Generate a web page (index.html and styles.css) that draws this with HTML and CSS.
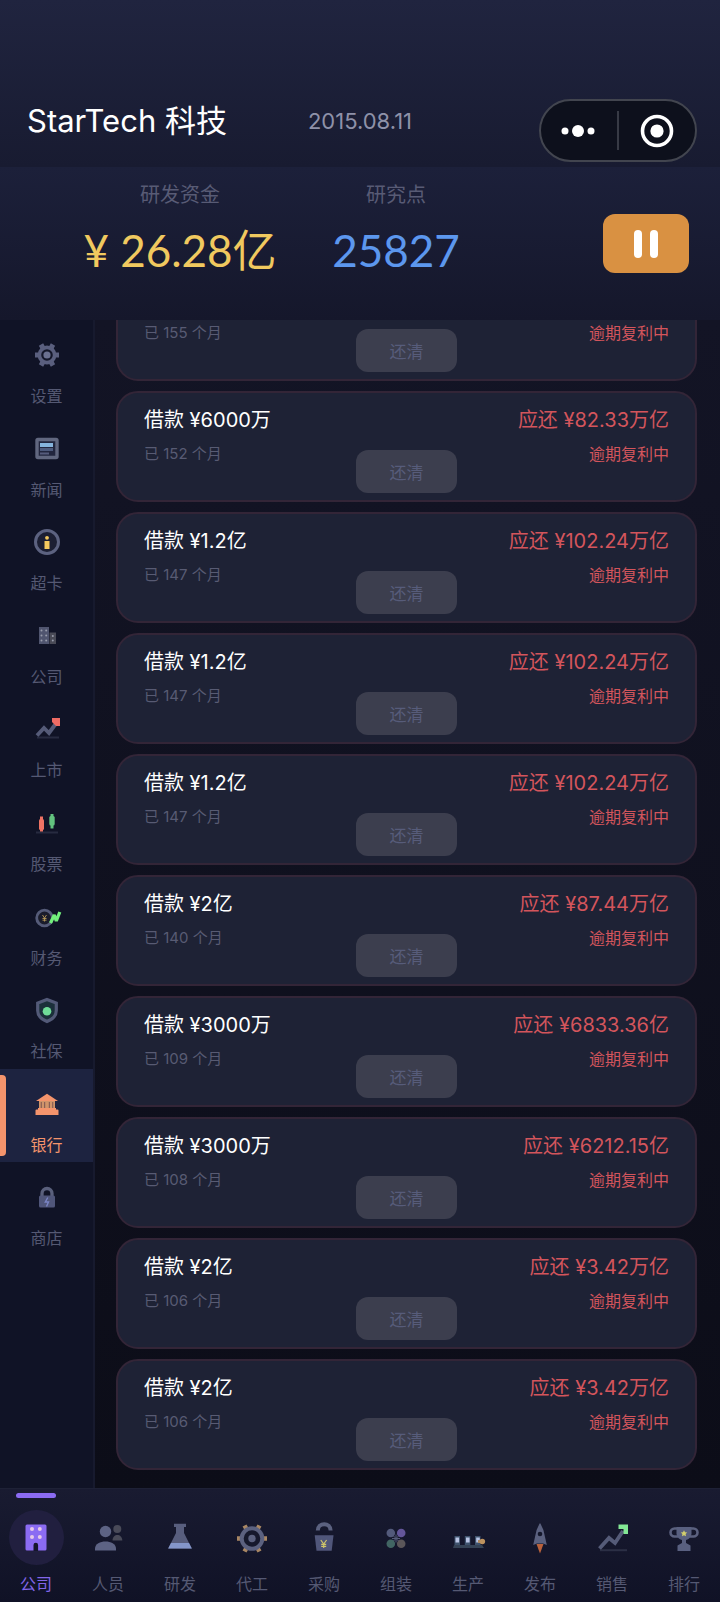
FILE: index.html
```html
<!DOCTYPE html>
<html lang="zh-CN">
<head>
<meta charset="utf-8">
<meta name="viewport" content="width=device-width, initial-scale=1">
<title>StarTech 科技</title>
<link rel="stylesheet" href="styles.css">
</head>
<body>
<header class="header">
  <div class="title-bar">
    <h1 class="company">StarTech 科技</h1>
    <time class="date" datetime="2015-08-11">2015.08.11</time>
  </div>
  <div class="capsule">
    <button class="capsule-btn" type="button" aria-label="更多">
      <svg width="36" height="36" viewBox="0 0 36 36" fill="#fff"><circle cx="4" cy="18" r="3.500"/><circle cx="17" cy="18" r="6"/><circle cx="30" cy="18" r="3.500"/></svg>
    </button>
    <span class="capsule-line"></span>
    <button class="capsule-btn" type="button" aria-label="关闭">
      <svg width="36" height="36" viewBox="0 0 36 36"><circle cx="18" cy="18" r="14.500" fill="none" stroke="#fff" stroke-width="3.600"/><circle cx="18" cy="18" r="6.600" fill="#fff"/></svg>
    </button>
  </div>
  <div class="stats">
    <div class="stat"><span class="stat-label">研发资金</span><span class="stat-value money">¥ 26.28亿</span></div>
    <div class="stat"><span class="stat-label">研究点</span><span class="stat-value points">25827</span></div>
    <button class="pause" type="button" aria-label="暂停"><span class="pause-bar"></span><span class="pause-bar"></span></button>
  </div>
</header>

<div class="content">
  <nav class="sidebar" aria-label="功能">
    <div class="side-list">
      <button class="side-item" type="button">
        <svg class="icon" viewBox="0 0 36 36"><g stroke="#5a5f7e" stroke-width="5"><path d="M6 18H11M25 18H30M12 7.600l2.500 4.300M21.500 24.100l2.500 4.300M24 7.600l-2.500 4.300M14.500 24.100l-2.500 4.300"/></g><circle cx="18" cy="18" r="7.600" fill="#14172a" stroke="#5a5f7e" stroke-width="3.600"/><circle cx="18" cy="18" r="3.600" fill="#6a7090"/></svg>
        <span>设置</span>
      </button>
      <button class="side-item" type="button">
        <svg class="icon" viewBox="0 0 36 36"><rect x="8" y="8.500" width="20" height="18" rx="1" fill="#22263e" stroke="#61677f" stroke-width="3.400"/><path d="M11 12h13v4H11z" fill="#86b4dc"/><path d="M11 17h13v3H11z" fill="#4d5a7c"/><path d="M11 21.500h9v2h-9z" fill="#565c7c"/></svg>
        <span>新闻</span>
      </button>
      <button class="side-item" type="button">
        <svg class="icon" viewBox="0 0 36 36"><circle cx="18" cy="18" r="11.500" fill="#1c1f33" stroke="#5c6280" stroke-width="3"/><circle cx="18" cy="13.800" r="1.900" fill="#f4c95e"/><path d="M15.500 17h5v8h-5z" fill="#f4c95e"/></svg>
        <span>超卡</span>
      </button>
      <button class="side-item" type="button">
        <svg class="icon" viewBox="0 0 36 36"><path d="M10 9h10v17H10z" fill="#50556f"/><path d="M20.500 14.500H27V26h-6.500z" fill="#494a56"/><g fill="#989cab"><circle cx="12.500" cy="12.500" r="1"/><circle cx="17.200" cy="12.500" r="1"/><circle cx="12.500" cy="17.500" r="1"/><circle cx="17.200" cy="17.500" r="1"/><circle cx="12.500" cy="22.500" r="1"/><circle cx="17.200" cy="22.500" r="1"/><circle cx="23.800" cy="18" r="1"/><circle cx="23.800" cy="22.500" r="1"/></g></svg>
        <span>公司</span>
      </button>
      <button class="side-item" type="button">
        <svg class="icon" viewBox="0 0 36 36"><path d="M8 26.500h22" stroke="#272b40" stroke-width="2"/><path d="M8 24.500l7-7.500 5 5 7-9.500" fill="none" stroke="#555b78" stroke-width="3.800"/><path d="M23 7h8v8h-4l-4-4z" fill="#ee6b64"/></svg>
        <span>上市</span>
      </button>
      <button class="side-item" type="button">
        <svg class="icon" viewBox="0 0 36 36"><path d="M7 27.500h22" stroke="#272b40" stroke-width="2"/><path d="M12.500 11.500v15" stroke="#ee7364" stroke-width="3"/><rect x="10" y="14" width="5" height="11" rx="1.500" fill="#ee7364"/><path d="M23 9v14.500" stroke="#62c27e" stroke-width="3"/><rect x="20.300" y="11" width="5.400" height="9.500" rx="1.500" fill="#62c27e"/></svg>
        <span>股票</span>
      </button>
      <button class="side-item" type="button">
        <svg class="icon" viewBox="0 0 36 36"><circle cx="15.500" cy="19" r="7.800" fill="#1a1c2b" stroke="#555b78" stroke-width="2.800"/><path d="M13.500 16l2 3 2-3M15.500 19v3.500M13.500 19.500h4M13.500 21.200h4" fill="none" stroke="#b89a58" stroke-width="0.900"/><path d="M21.500 24l3.800-8 2 6 3.500-9" fill="none" stroke="#72ef7c" stroke-width="3.200" stroke-linejoin="bevel"/></svg>
        <span>财务</span>
      </button>
      <button class="side-item" type="button">
        <svg class="icon" viewBox="0 0 36 36"><path d="M18 7.500l9.300 3.500v7.500c0 5-3.600 8.700-9.300 11-5.700-2.300-9.300-6-9.300-11V11z" fill="#1b2f3a" stroke="#535a78" stroke-width="3.200"/><circle cx="18" cy="19.200" r="4.300" fill="#6fdc98"/></svg>
        <span>社保</span>
      </button>
      <button class="side-item side-active" type="button" aria-current="page">
        <svg class="icon" viewBox="0 0 36 36"><path d="M10 15h16v8H10z" fill="#d0946a"/><path d="M12.300 16v7M15.600 16v7M20.400 16v7M23.700 16v7" stroke="#8a5f55" stroke-width="1.200"/><path d="M18 7.700L29 15H7z" fill="#f4946c"/><path d="M9 22h18v1.500h1.500q1 0 1 1V29h-23v-4.500q0-1 1-1H9z" fill="#f4946c"/></svg>
        <span>银行</span>
      </button>
      <button class="side-item" type="button">
        <svg class="icon" viewBox="0 0 36 36"><path d="M13 18v-3.500a5 5 0 0 1 10 0V18" fill="none" stroke="#5a607c" stroke-width="3.300"/><rect x="10" y="16.500" width="16" height="12" rx="1.500" fill="#50567a"/><path d="M18.800 18.500l-2.500 4.500h3.200l-2 4.500" fill="none" stroke="#7a84c4" stroke-width="1.400"/></svg>
        <span>商店</span>
      </button>
    </div>
  </nav>

  <main class="loans">
    <article class="loan"><div class="col"><p class="months">已 155 个月</p></div><button class="repay" type="button" disabled>还清</button><div class="col due"><p class="status">逾期复利中</p></div></article>
    <article class="loan"><div class="col"><h2 class="name">借款 ¥6000万</h2><p class="months">已 152 个月</p></div><button class="repay" type="button" disabled>还清</button><div class="col due"><p class="amount">应还 ¥82.33万亿</p><p class="status">逾期复利中</p></div></article>
    <article class="loan"><div class="col"><h2 class="name">借款 ¥1.2亿</h2><p class="months">已 147 个月</p></div><button class="repay" type="button" disabled>还清</button><div class="col due"><p class="amount">应还 ¥102.24万亿</p><p class="status">逾期复利中</p></div></article>
    <article class="loan"><div class="col"><h2 class="name">借款 ¥1.2亿</h2><p class="months">已 147 个月</p></div><button class="repay" type="button" disabled>还清</button><div class="col due"><p class="amount">应还 ¥102.24万亿</p><p class="status">逾期复利中</p></div></article>
    <article class="loan"><div class="col"><h2 class="name">借款 ¥1.2亿</h2><p class="months">已 147 个月</p></div><button class="repay" type="button" disabled>还清</button><div class="col due"><p class="amount">应还 ¥102.24万亿</p><p class="status">逾期复利中</p></div></article>
    <article class="loan"><div class="col"><h2 class="name">借款 ¥2亿</h2><p class="months">已 140 个月</p></div><button class="repay" type="button" disabled>还清</button><div class="col due"><p class="amount">应还 ¥87.44万亿</p><p class="status">逾期复利中</p></div></article>
    <article class="loan"><div class="col"><h2 class="name">借款 ¥3000万</h2><p class="months">已 109 个月</p></div><button class="repay" type="button" disabled>还清</button><div class="col due"><p class="amount">应还 ¥6833.36亿</p><p class="status">逾期复利中</p></div></article>
    <article class="loan"><div class="col"><h2 class="name">借款 ¥3000万</h2><p class="months">已 108 个月</p></div><button class="repay" type="button" disabled>还清</button><div class="col due"><p class="amount">应还 ¥6212.15亿</p><p class="status">逾期复利中</p></div></article>
    <article class="loan"><div class="col"><h2 class="name">借款 ¥2亿</h2><p class="months">已 106 个月</p></div><button class="repay" type="button" disabled>还清</button><div class="col due"><p class="amount">应还 ¥3.42万亿</p><p class="status">逾期复利中</p></div></article>
    <article class="loan"><div class="col"><h2 class="name">借款 ¥2亿</h2><p class="months">已 106 个月</p></div><button class="repay" type="button" disabled>还清</button><div class="col due"><p class="amount">应还 ¥3.42万亿</p><p class="status">逾期复利中</p></div></article>
  </main>
</div>

<nav class="tabs" aria-label="主导航">
  <button class="tab tab-active" type="button" aria-current="page">
    <span class="tab-icon"><svg class="icon" viewBox="0 0 36 36"><rect x="7.500" y="4.500" width="21" height="26" rx="1.500" fill="#8b6bf2"/><g fill="#e6c8e8"><circle cx="14" cy="9" r="2"/><circle cx="21.800" cy="9" r="2"/><circle cx="14" cy="17" r="2"/><circle cx="21.800" cy="17" r="2"/></g><path d="M15.500 31v-6a2.300 2.300 0 0 1 4.600 0v6z" fill="#15162c"/></svg></span>
    <span>公司</span>
  </button>
  <button class="tab" type="button">
    <span class="tab-icon"><svg class="icon" viewBox="0 0 36 36"><g fill="#494a58"><circle cx="27.300" cy="9" r="4"/><path d="M22.500 20.500c0-7.500 9.800-7.500 9.800 0z"/></g><g fill="#5d6384"><circle cx="15.500" cy="11.500" r="5.700"/><path d="M5 30.500v-2c0-9.500 21-9.500 21 0v2z"/></g></svg></span>
    <span>人员</span>
  </button>
  <button class="tab" type="button">
    <span class="tab-icon"><svg class="icon" viewBox="0 0 36 36"><path d="M12 3.700h12v3.300h-2v6l7.800 15.500H6.200L14 13V7h-2z" fill="#585e7e"/><path d="M9 23h18l2.800 5.500H6.200z" fill="#8496ca"/></svg></span>
    <span>研发</span>
  </button>
  <button class="tab" type="button">
    <span class="tab-icon"><svg class="icon" viewBox="0 0 36 36"><path d="M3 18.500h6M27 18.500h6M10.500 5.500l3 5.200M22.500 26.300l3 5.200M25.500 5.500l-3 5.200M13.500 26.300l-3 5.200" stroke="#a98763" stroke-width="4.500"/><circle cx="18" cy="18.500" r="10.300" fill="#15182c" stroke="#5b617f" stroke-width="4"/><circle cx="18" cy="18.500" r="3.700" fill="#5b617f"/></svg></span>
    <span>代工</span>
  </button>
  <button class="tab" type="button">
    <span class="tab-icon"><svg class="icon" viewBox="0 0 36 36"><path d="M11.800 10.500c0-8.500 12.800-8.500 12.800 0" fill="none" stroke="#5b617f" stroke-width="4"/><path d="M8.700 15.300h18.800l-1.800 15.500H10.500z" fill="#50567a"/><path d="M14.800 20l2.900 4 2.900-4M17.700 24v4M15.200 24.300h5M15.200 26.300h5" fill="none" stroke="#cfc66a" stroke-width="1.200"/></svg></span>
    <span>采购</span>
  </button>
  <button class="tab" type="button">
    <span class="tab-icon"><svg class="icon" viewBox="0 0 36 36"><circle cx="12.800" cy="13" r="4.300" fill="#535a7b"/><circle cx="23.200" cy="13" r="4.300" fill="#64569a"/><circle cx="12.800" cy="23.800" r="4.300" fill="#416563"/><circle cx="23.200" cy="23.800" r="4.300" fill="#5b5659"/><path d="M18 14.500v8M14 18.500h8M15.500 16l5 5M20.500 16l-5 5" stroke="#555b78" stroke-width="1"/></svg></span>
    <span>组装</span>
  </button>
  <button class="tab" type="button">
    <span class="tab-icon"><svg class="icon" viewBox="0 0 36 36"><path d="M4.500 16h5.500v9H4.500zM14.800 16h5.500v9h-5.500zM25 16h5.500v9H25z" fill="#3e526c"/><path d="M5.500 17.500h3.600v5H5.500zM16 17.500h3.600v5H16zM26.200 17.500h3.600v5h-3.600z" fill="#b8c4e4"/><path d="M4 25h28l2 3H3z" fill="#354356"/><path d="M28 20h3v3h-3z" fill="#a98763"/><circle cx="32.300" cy="21.500" r="2.800" fill="#bd925e"/></svg></span>
    <span>生产</span>
  </button>
  <button class="tab" type="button">
    <span class="tab-icon"><svg class="icon" viewBox="0 0 36 36"><path d="M14.500 24h7L18 33.500z" fill="#b9623c"/><path d="M18 3q4 6 5 14l1.800 8L21 23.500h-6L11.200 25 13 17q1-8 5-14z" fill="#5b617f"/><circle cx="18" cy="14" r="2.300" fill="#15182c"/></svg></span>
    <span>发布</span>
  </button>
  <button class="tab" type="button">
    <span class="tab-icon"><svg class="icon" viewBox="0 0 36 36"><path d="M6 30.200h27" stroke="#2b2f45" stroke-width="2"/><path d="M5.500 28.500l9.500-10.500 6 5 8-12" fill="none" stroke="#555b78" stroke-width="3.800"/><path d="M24.500 4.500H34V14h-4.500V9h-5z" fill="#83e895"/></svg></span>
    <span>销售</span>
  </button>
  <button class="tab" type="button">
    <span class="tab-icon"><svg class="icon" viewBox="0 0 36 36"><path d="M11 8.500H8.500a3.400 3.400 0 0 0 0 8H12M25 8.500h2.500a3.400 3.400 0 0 1 0 8H24" fill="none" stroke="#5b617f" stroke-width="2.600"/><path d="M10.500 7h15v7q-1 5-5.500 6v3l4.500 2.500v5.500h-13v-5.500L16 23v-3q-4.500-1-5.500-6z" fill="#596080"/><path d="M18 10.200l1 2 2.200.3-1.600 1.500.4 2.200-2-1-2 1 .4-2.200-1.600-1.500 2.200-.3z" fill="#d3cf6c"/></svg></span>
    <span>排行</span>
  </button>
</nav>
</body>
</html>
```
FILE: styles.css
```css
* { box-sizing: border-box; }

body {
  margin: 0;
  height: 100vh;
  display: flex;
  flex-direction: column;
  background: #0e0f1c;
  color: #fff;
  font-family: Inter, "Noto Sans CJK SC", sans-serif;
}

button {
  margin: 0;
  padding: 0;
  border: 0;
  background: none;
  color: inherit;
  font: inherit;
}

h1, h2, p { margin: 0; font-weight: 400; }

.header {
  position: relative;
  flex: none;
  background: #171a2f;
}

.title-bar {
  display: grid;
  grid-template-columns: 1fr auto 1fr;
  align-items: center;
  padding: 101px 27px 26px;
  background: linear-gradient(#20243f, #181b31);
}

.company { font-size: 31px; line-height: 40px; white-space: nowrap; }
.date { font-size: 22px; line-height: 40px; color: #8e91a8; }

.capsule {
  position: absolute;
  top: 99px;
  right: 23px;
  width: 158px;
  height: 63px;
  display: flex;
  align-items: center;
  border: 2px solid #42454f;
  border-radius: 32px;
  background: #0d101c;
}

.capsule-btn { flex: 1; display: flex; justify-content: center; }
.capsule-line { width: 2px; height: 39px; background: #373a45; }

.stats {
  display: grid;
  grid-template-columns: 1fr 1fr 185px;
  padding: 14px 31px 42px 72px;
  background: linear-gradient(#1c203a, #15172b);
}

.stat { display: flex; flex-direction: column; align-items: center; gap: 13px; }
.stat-label { font-size: 20px; line-height: 28px; color: #585b75; }
.stat-value {
  font-family: Lato, "Noto Sans CJK SC", sans-serif;
  font-size: 44px;
  line-height: 56px;
  white-space: nowrap;
}
.money { color: #f0c95f; }
.points { color: #5c97ee; }

.pause {
  width: 86px;
  height: 59px;
  margin-top: 33px;
  justify-self: end;
  display: flex;
  align-items: center;
  justify-content: center;
  gap: 8px;
  border-radius: 12px;
  background: #d99142;
}

.pause-bar { width: 8px; height: 28px; border-radius: 4px; background: #fff; }

.content {
  flex: 1;
  min-height: 0;
  display: flex;
  background: linear-gradient(#131425, #0c0d18);
}

.sidebar {
  flex: none;
  width: 95px;
  border-right: 2px solid #171a2e;
  background: #101326;
}

.side-list {
  display: grid;
  grid-auto-rows: 1fr;
  height: 936px;
}

.side-item {
  display: flex;
  flex-direction: column;
  align-items: center;
  gap: 11px;
  padding-top: 17px;
  font-size: 16px;
  line-height: 24px;
  color: #555973;
}

.side-active {
  position: relative;
  background: #1d2340;
  color: #f4946c;
}

.side-active::before {
  content: "";
  position: absolute;
  top: 6px;
  bottom: 6px;
  left: 0;
  width: 6px;
  border-radius: 0 4px 4px 0;
  background: #f4946c;
}

.icon { display: block; width: 36px; height: 36px; }

.loans {
  flex: 1;
  min-width: 0;
  display: flex;
  flex-direction: column;
  justify-content: flex-end;
  gap: 10px;
  padding: 0 23px 18px 21px;
  overflow: hidden;
}

.loan {
  flex: none;
  display: grid;
  grid-template-columns: 1fr 101px 1fr;
  align-items: start;
  padding: 15px 26px 7px;
  border: 2px solid #332537;
  border-radius: 22px;
  background: #1e2235;
}

.col {
  display: grid;
  gap: 10px;
  align-content: end;
  min-height: 58px;
  line-height: 24px;
  white-space: nowrap;
}
.name, .amount { font-size: 20px; }
.months { font-size: 15px; color: #585b73; }
.status { font-size: 16px; }
.due { justify-items: end; color: #d3555c; }

.repay {
  height: 43px;
  margin-top: 42px;
  border-radius: 12px;
  background: #3c3e4e;
  color: #575c7a;
  font-size: 17px;
}

.tabs {
  flex: none;
  display: grid;
  grid-template-columns: repeat(10, 1fr);
  border-top: 1px solid #1e2136;
  background: linear-gradient(#191b31, #101226);
}

.tab {
  position: relative;
  display: flex;
  flex-direction: column;
  align-items: center;
  gap: 7px;
  padding: 21px 0 6px;
  font-size: 16px;
  line-height: 24px;
  color: #555973;
}

.tab-icon {
  width: 55px;
  height: 55px;
  display: grid;
  place-items: center;
  border-radius: 50%;
}

.tab-active { color: #8266e8; }
.tab-active .tab-icon { background: #211f3f; }

.tab-active::before {
  content: "";
  position: absolute;
  top: 4px;
  left: 50%;
  width: 40px;
  height: 5px;
  margin-left: -20px;
  border-radius: 3px;
  background: #8b6bf2;
}
```
